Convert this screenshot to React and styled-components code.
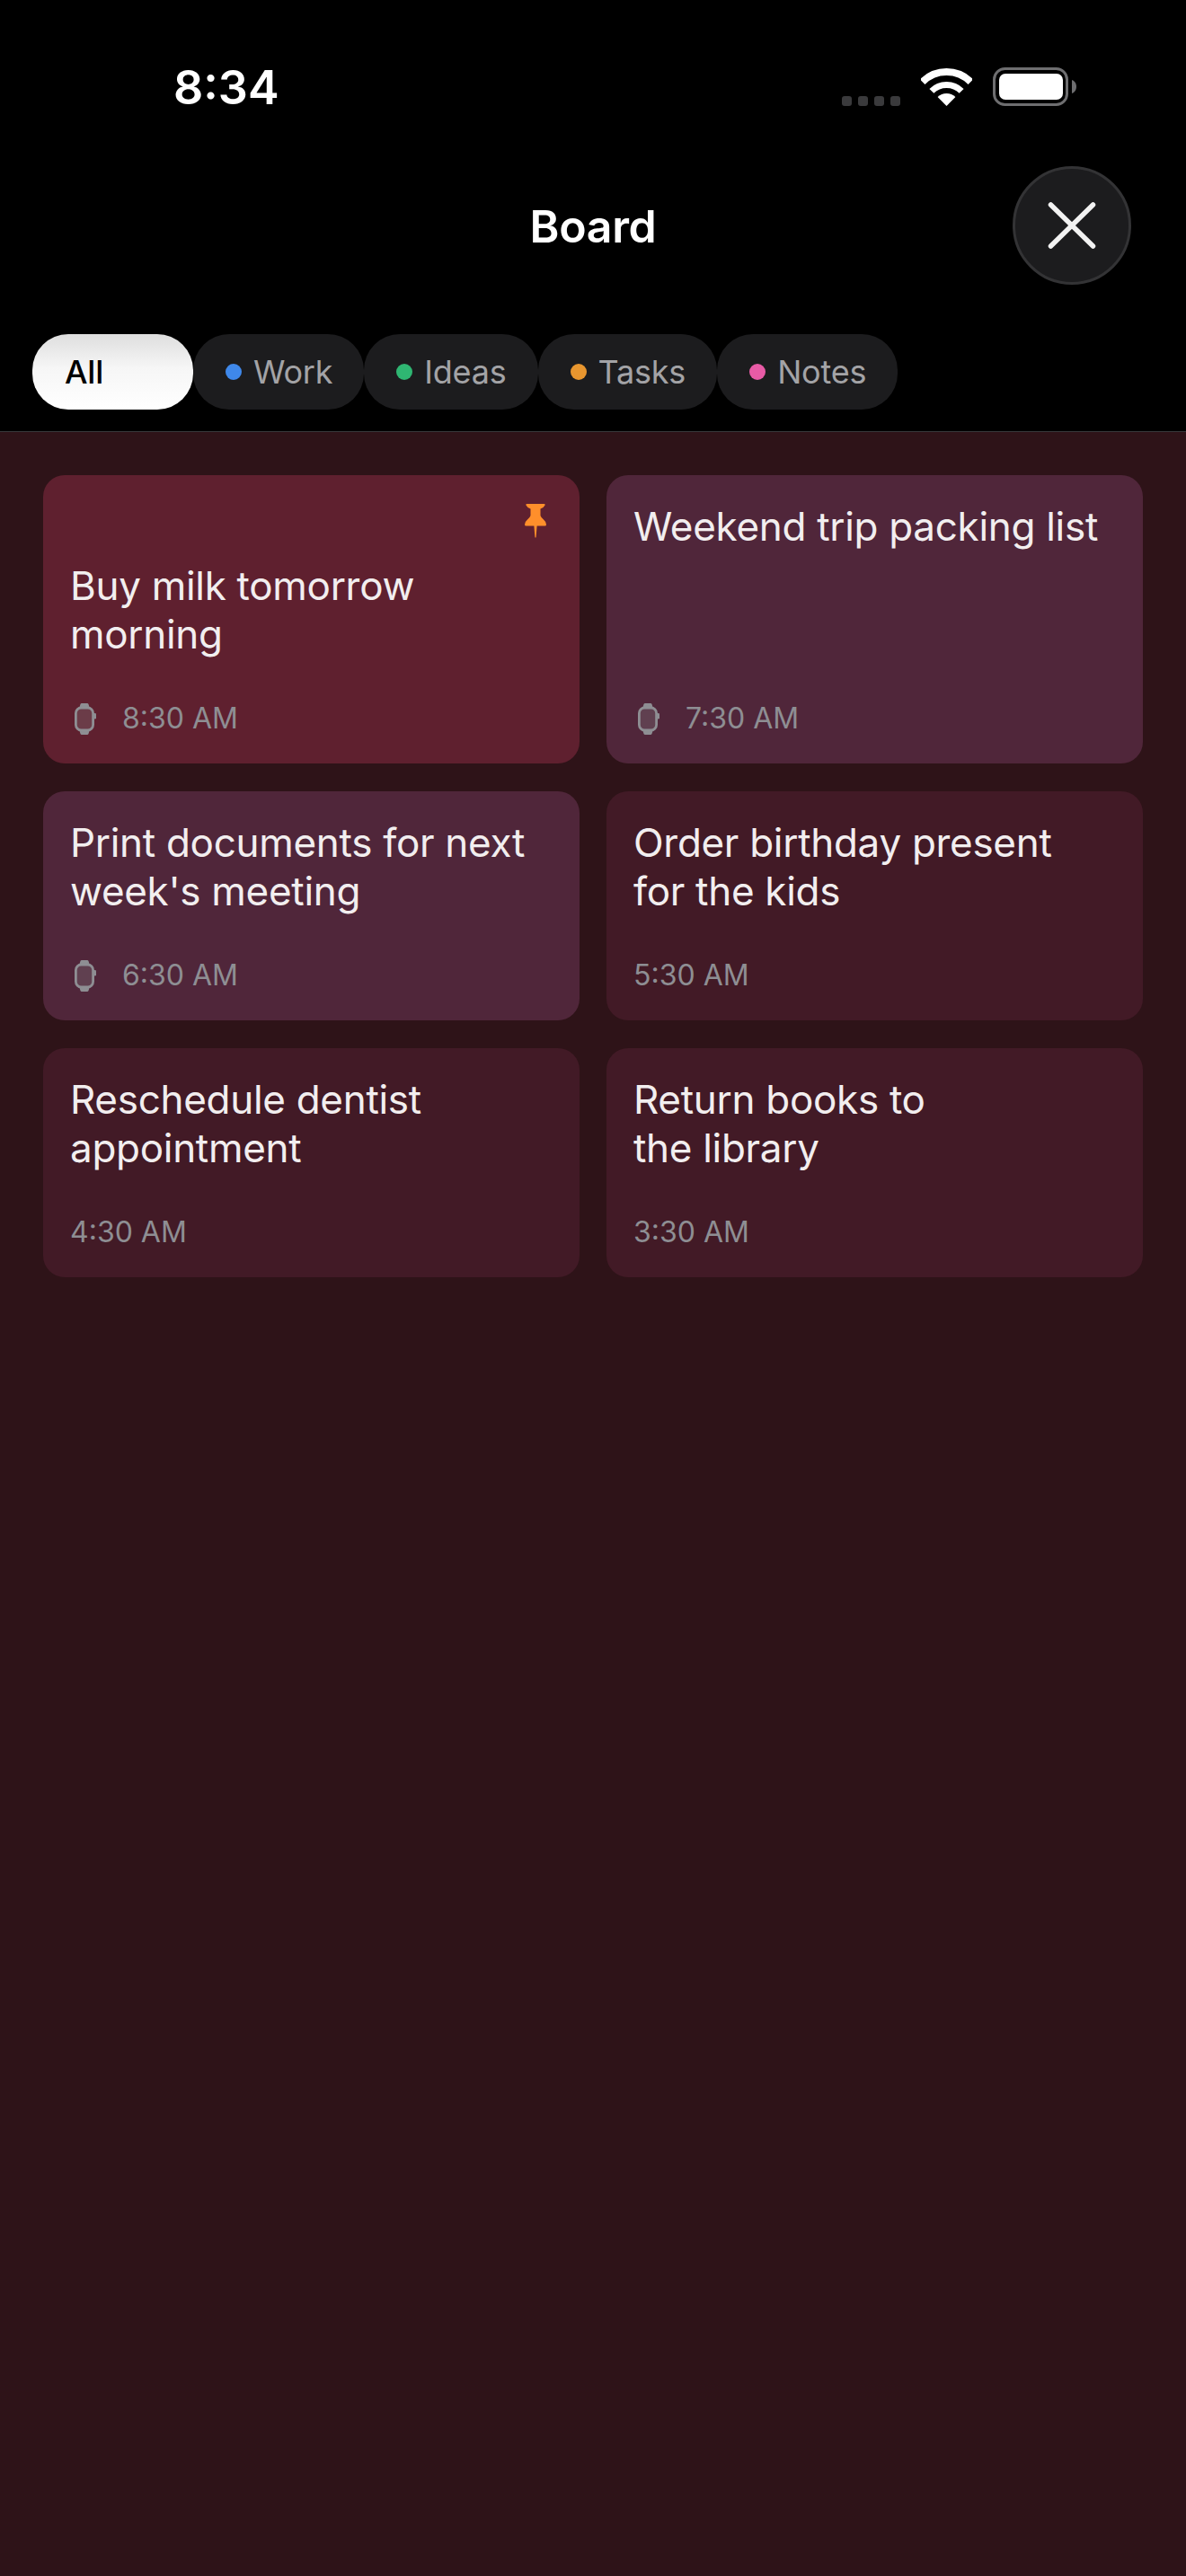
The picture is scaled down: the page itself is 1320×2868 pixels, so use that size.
import React from 'react';
import styled, { createGlobalStyle } from 'styled-components';

const GlobalStyle = createGlobalStyle`
  html, body {
    margin: 0;
    background: #2e1318;
  }
  * {
    box-sizing: border-box;
  }
`;

const Page = styled.div`
  width: 1320px;
  height: 2868px;
  overflow: hidden;
  background: #2e1318;
  font-family: Inter, "Liberation Sans", sans-serif;
`;

const TopBar = styled.header`
  background: #000;
  height: 481px;
  border-bottom: 1px solid #38383a;
`;

const StatusBar = styled.div`
  height: 185px;
  padding: 72px 122px 0 193px;
  display: flex;
  justify-content: space-between;
  align-items: flex-start;
`;

const Clock = styled.div`
  color: #fff;
  font-size: 52px;
  line-height: 52px;
  font-weight: 600;
`;

const StatusIcons = styled.div`
  display: flex;
  align-items: flex-end;
  margin-top: 3px;
`;

const SignalDots = styled.div`
  display: flex;
  gap: 7px;
  margin-right: 23px;
`;

const SignalDot = styled.span`
  width: 11px;
  height: 11px;
  border-radius: 3px;
  background: #3a3a3c;
`;

const NavBar = styled.div`
  height: 132px;
  padding-right: 61px;
  display: grid;
  grid-template-columns: 132px 1fr 132px;
  align-items: center;
`;

const Title = styled.h1`
  grid-column: 2;
  margin: 2px 0 0;
  padding-left: 61px;
  text-align: center;
  color: #fff;
  font-size: 50px;
  line-height: 58px;
  font-weight: 600;
  letter-spacing: -0.3px;
`;

const CloseButton = styled.button`
  grid-column: 3;
  width: 132px;
  height: 132px;
  padding: 0;
  border-radius: 50%;
  border: 3px solid #333335;
  background: #1c1c1e;
  display: flex;
  align-items: center;
  justify-content: center;
`;

const Tabs = styled.nav`
  display: flex;
  margin-top: 55px;
  padding-left: 36px;
`;

const Tab = styled.div`
  height: 84px;
  min-width: ${(p) => (p.$active ? '179px' : '0')};
  padding: 0 35px 0 36px;
  border-radius: 40px;
  display: flex;
  align-items: center;
  gap: 13px;
  font-size: 36px;
  letter-spacing: -0.2px;
  font-weight: ${(p) => (p.$active ? 500 : 400)};
  color: ${(p) => (p.$active ? '#000' : '#a3a3a6')};
  background: ${(p) => (p.$active ? 'linear-gradient(#dedede, #f6f6f6 45%, #fff)' : '#1c1c1e')};
`;

const TabDot = styled.span`
  width: 18px;
  height: 18px;
  border-radius: 50%;
  background: ${(p) => p.$color};
`;

const Board = styled.main`
  padding: 48px 48px 0;
  display: grid;
  grid-template-columns: 597px 597px;
  gap: 31px 30px;
  align-items: stretch;
`;

const Card = styled.article`
  min-height: 255px;
  padding: 30px;
  border-radius: 24px;
  display: flex;
  flex-direction: column;
  background: ${(p) => p.$bg};
`;

const PinRow = styled.div`
  height: 66px;
  display: flex;
  justify-content: flex-end;
  padding: 2px 7px 0 0;
`;

const CardTitle = styled.p`
  margin: 0 0 47px;
  color: #f2eeef;
  font-size: 44px;
  line-height: 54px;
  font-weight: 400;
  letter-spacing: -0.3px;
`;

const CardFooter = styled.div`
  margin-top: auto;
  height: 40px;
  display: flex;
  align-items: center;
  gap: 29px;
  padding-left: ${(p) => (p.$withIcon ? '5px' : '0')};
`;

const CardTime = styled.span`
  color: #8e8e93;
  font-size: 32px;
  line-height: 40px;
`;

const Wifi = () => (
  <svg width="57" height="42" viewBox="0 0 57 42" fill="none">
    <path d="M1.63 15.13A38 38 0 0 1 55.37 15.13" stroke="#fff" strokeWidth="8" />
    <path d="M11.88 25.38A23.5 23.5 0 0 1 45.12 25.38" stroke="#fff" strokeWidth="7" />
    <path d="M28.5 42L18.6 32.1A14 14 0 0 1 38.4 32.1Z" fill="#fff" />
  </svg>
);

const Battery = () => (
  <svg width="93" height="43" viewBox="0 0 93 43" fill="none" style={{ marginLeft: 23 }}>
    <rect x="1.5" y="1.5" width="81" height="40" rx="12" stroke="#6e6e70" strokeWidth="3" />
    <rect x="7" y="7" width="71" height="29" rx="7" fill="#fff" />
    <path d="M88 14C91 15 93 18 93 21.5S91 28 88 29Z" fill="#6e6e70" />
  </svg>
);

const CloseIcon = () => (
  <svg width="54" height="52" viewBox="0 0 54 52" fill="none">
    <path d="M3.5 3L50.5 49M50.5 3L3.5 49" stroke="#f2f2f2" strokeWidth="5.5" strokeLinecap="round" />
  </svg>
);

const PinIcon = () => (
  <svg width="24" height="38" viewBox="0 0 24 38">
    <path
      d="M2.5 0H21.5Q23 0 22.5 1.5Q21 4.5 17.5 5.5V13Q18 15 21 17.5Q24 20 24 23Q24 24.5 22.5 24.5H13.6L12.6 37Q12 38.5 11.4 37L10.4 24.5H1.5Q0 24.5 0 23Q0 20 3 17.5Q6 15 6.5 13V5.5Q3 4.5 1.5 1.5Q1 0 2.5 0Z"
      fill="#ff8f2b"
    />
  </svg>
);

const WatchIcon = () => (
  <svg width="24" height="35" viewBox="0 0 24 35">
    <path d="M5 6L6.5 1Q6.8 0 8 0H14Q15.2 0 15.5 1L17 6ZM5 29L6.5 34Q6.8 35 8 35H14Q15.2 35 15.5 34L17 29Z" fill="#8e8e93" />
    <rect x="1.4" y="5" width="19.2" height="25" rx="6" fill="rgba(142,142,147,0.25)" stroke="#8e8e93" strokeWidth="2.8" />
    <rect x="21.6" y="11" width="2.4" height="6.5" rx="1.2" fill="#8e8e93" />
  </svg>
);

const tabs = [
  { label: 'Work', color: '#3f88ea' },
  { label: 'Ideas', color: '#2fb672' },
  { label: 'Tasks', color: '#e8962f' },
  { label: 'Notes', color: '#e85ba6' },
];

const notes = [
  { title: ['Buy milk tomorrow', 'morning'], time: '8:30 AM', bg: '#5f202f', pinned: true, watch: true },
  { title: ['Weekend trip packing list'], time: '7:30 AM', bg: '#50263a', watch: true },
  { title: ['Print documents for next', "week's meeting"], time: '6:30 AM', bg: '#50263a', watch: true },
  { title: ['Order birthday present', 'for the kids'], time: '5:30 AM', bg: '#421a26' },
  { title: ['Reschedule dentist', 'appointment'], time: '4:30 AM', bg: '#421a26' },
  { title: ['Return books to', 'the library'], time: '3:30 AM', bg: '#421a26' },
];

const App = () => (
  <Page>
    <GlobalStyle />
    <TopBar>
      <StatusBar>
        <Clock>8:34</Clock>
        <StatusIcons>
          <SignalDots>
            <SignalDot />
            <SignalDot />
            <SignalDot />
            <SignalDot />
          </SignalDots>
          <Wifi />
          <Battery />
        </StatusIcons>
      </StatusBar>
      <NavBar>
        <Title>Board</Title>
        <CloseButton aria-label="Close">
          <CloseIcon />
        </CloseButton>
      </NavBar>
      <Tabs>
        <Tab $active>All</Tab>
        {tabs.map((tab) => (
          <Tab key={tab.label}>
            <TabDot $color={tab.color} />
            {tab.label}
          </Tab>
        ))}
      </Tabs>
    </TopBar>
    <Board>
      {notes.map((note) => (
        <Card key={note.time} $bg={note.bg}>
          {note.pinned && (
            <PinRow>
              <PinIcon />
            </PinRow>
          )}
          <CardTitle>
            {note.title.map((line) => (
              <React.Fragment key={line}>
                {line}
                <br />
              </React.Fragment>
            ))}
          </CardTitle>
          <CardFooter $withIcon={note.watch}>
            {note.watch && <WatchIcon />}
            <CardTime>{note.time}</CardTime>
          </CardFooter>
        </Card>
      ))}
    </Board>
  </Page>
);

export default App;
